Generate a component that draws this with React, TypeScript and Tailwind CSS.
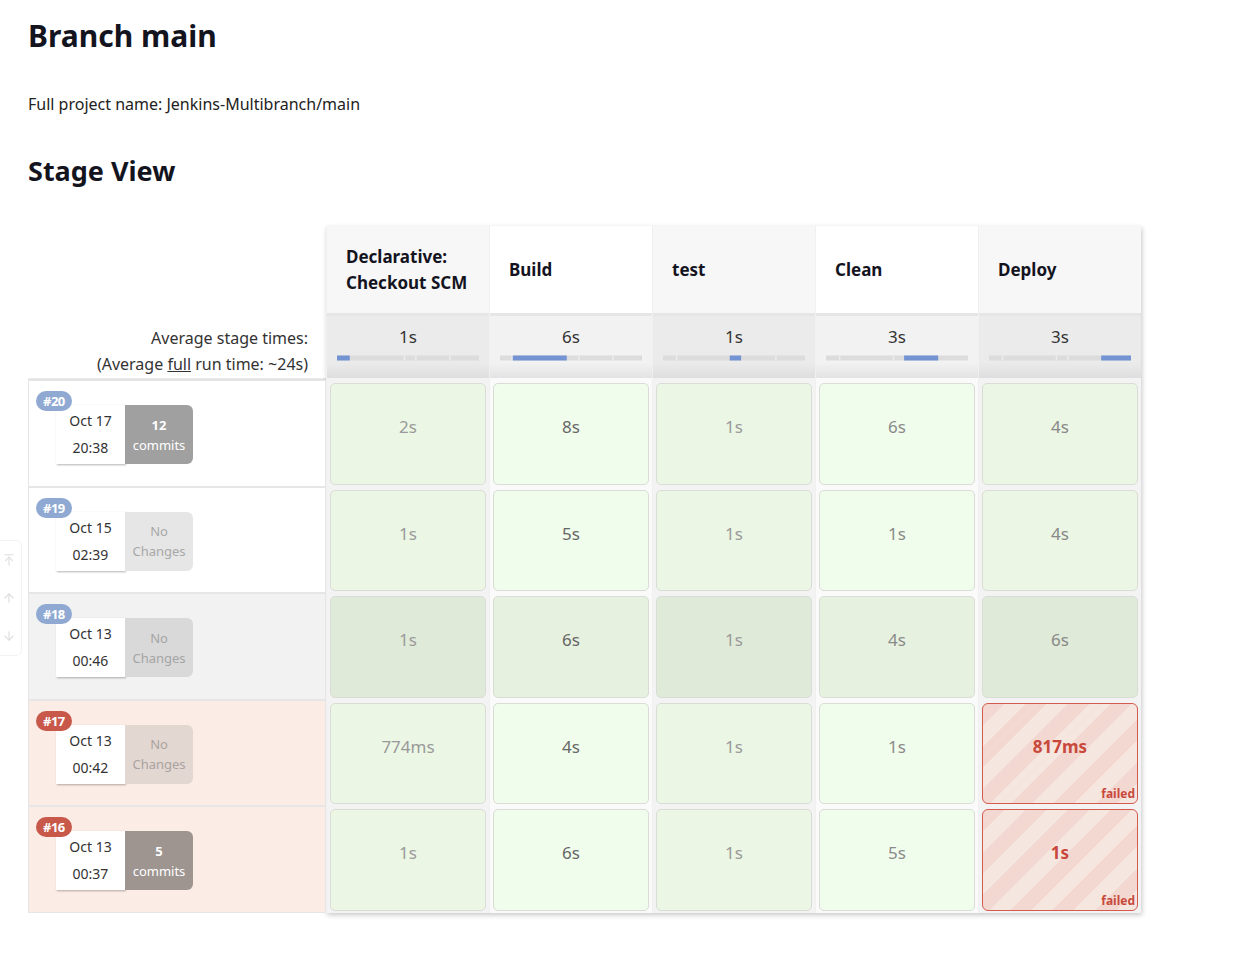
import { ArrowUpToLine, ArrowUp, ArrowDown } from "lucide-react";

// stage headers and the average-bar drawing data (percent of track)
const stages = [
  { name: "Declarative: Checkout SCM", avg: "1s", fill: [0, 9], ticks: [47, 55, 79] },
  { name: "Build", avg: "6s", fill: [9, 47], ticks: [8, 55, 79] },
  { name: "test", avg: "1s", fill: [47, 55], ticks: [9, 79] },
  { name: "Clean", avg: "3s", fill: [55, 79], ticks: [9, 47] },
  { name: "Deploy", avg: "3s", fill: [79, 100], ticks: [9, 47, 55] },
];

interface IBuild {
  num: number;
  date: string;
  time: string;
  commits: number;
  failed: boolean;
  shaded: boolean;
  cells: string[];
  changeBg: string;
  changeText: string;
}

const builds: IBuild[] = [
  { num: 20, date: "Oct 17", time: "20:38", commits: 12, failed: false, shaded: false, cells: ["2s", "8s", "1s", "6s", "4s"], changeBg: "bg-[#a0a0a0]", changeText: "text-white" },
  { num: 19, date: "Oct 15", time: "02:39", commits: 0, failed: false, shaded: false, cells: ["1s", "5s", "1s", "1s", "4s"], changeBg: "bg-[#e6e6e6]", changeText: "text-[#a8a8a8]" },
  { num: 18, date: "Oct 13", time: "00:46", commits: 0, failed: false, shaded: true, cells: ["1s", "6s", "1s", "4s", "6s"], changeBg: "bg-[#d9d9d9]", changeText: "text-[#a5a5a5]" },
  { num: 17, date: "Oct 13", time: "00:42", commits: 0, failed: true, shaded: false, cells: ["774ms", "4s", "1s", "1s", "817ms"], changeBg: "bg-[#e3d7d2]", changeText: "text-[#aaa3a0]" },
  { num: 16, date: "Oct 13", time: "00:37", commits: 5, failed: true, shaded: false, cells: ["1s", "6s", "1s", "5s", "1s"], changeBg: "bg-[#9e9591]", changeText: "text-white" },
];

const cellText = ["text-[#9a9a9a]", "text-[#666]", "text-[#9a9a9a]", "text-[#8a8a8a]", "text-[#888]"];

function AvgBar({ fill, ticks }: { fill: number[]; ticks: number[] }) {
  return (
    <svg width="142" height="6" viewBox="0 0 142 6" className="block">
      <rect x="0" y="0.5" width="142" height="5" fill="#dcdcdc" />
      {ticks.map((t) => (
        <rect key={t} x={(t / 100) * 142} y="0.5" width="1.5" height="5" fill="#ececec" />
      ))}
      <rect x={(fill[0] / 100) * 142} y="0.5" width={((fill[1] - fill[0]) / 100) * 142} height="5" fill="#7393d3" />
    </svg>
  );
}

function BuildLabel({ b }: { b: IBuild }) {
  const rowBg = b.failed ? "bg-[#fcece6]" : b.shaded ? "bg-[#f2f2f2]" : "bg-white";
  return (
    <div className={`relative h-[106.5px] border border-[#e6e6e6] ${rowBg}`}>
      <span
        className={`absolute left-[7px] top-[10px] z-10 rounded-full px-[7px] text-[13px] font-bold leading-[20px] tracking-[-0.5px] text-white ${
          b.failed ? "bg-[#c8584a]" : "bg-[#8fa9d2]"
        }`}
      >
        #{b.num}
      </span>
      <div className="ml-[27px] mt-[24px] flex h-[59px] w-[137px]">
        <div className="flex w-[69px] flex-col items-center justify-center gap-[7px] bg-white text-[14px] leading-[20px] text-[#333] shadow-[1px_1px_2px_rgba(0,0,0,0.3)]">
          <span>{b.date}</span>
          <span>{b.time}</span>
        </div>
        <div
          className={`flex w-[68px] flex-col items-center justify-center rounded-r-[6px] text-[13px] leading-[20px] ${b.changeBg} ${b.changeText}`}
        >
          {b.commits > 0 ? (
            <>
              <span className="font-bold">{b.commits}</span>
              <span>commits</span>
            </>
          ) : (
            <>
              <span>No</span>
              <span>Changes</span>
            </>
          )}
        </div>
      </div>
    </div>
  );
}

function StageCell({ b, i }: { b: IBuild; i: number }) {
  const value = b.cells[i];
  const failed = b.failed && i === 4;
  const colBg = i % 2 === 0 ? "bg-[#f3f3f3]" : "bg-[#fafafa]";

  if (failed) {
    return (
      <div className={`h-[106.5px] px-[3px] pb-[2px] pt-[3px] ${colBg}`}>
        <div className="relative flex h-full items-center justify-center rounded-[6px] border-[1.5px] border-[#d35a4d] bg-[repeating-linear-gradient(135deg,#f3d8d1_0px,#f3d8d1_15px,#f6e6e0_15px,#f6e6e0_30px)]">
          <span className="pb-[14px] text-[17px] font-bold text-[#c8493c]">{value}</span>
          <span className="absolute bottom-[2px] right-[2px] text-[12px] font-bold leading-[14px] text-[#c8493c]">failed</span>
        </div>
      </div>
    );
  }

  const green = b.shaded
    ? i % 2 === 0
      ? "bg-[#dfebd8]"
      : "bg-[#e6f2df]"
    : i % 2 === 0
      ? "bg-[#ebf6e4]"
      : "bg-[#f1fdec]";

  return (
    <div className={`h-[106.5px] px-[3px] pb-[2px] pt-[3px] ${colBg}`}>
      <div className={`flex h-full items-center justify-center rounded-[5px] border border-[#d9ddd6] ${green}`}>
        <span className={`pb-[14px] text-[17px] ${cellText[i]}`}>{value}</span>
      </div>
    </div>
  );
}

export default function App() {
  return (
    <div className="relative min-h-[955px] bg-white px-[28px] pt-[14px] font-['Noto_Sans',sans-serif] text-[#14141f]">
      {/* 페이지 제목 */}
      <h1 className="text-[30px] font-bold leading-[44px]">Branch main</h1>
      <p className="mt-[34px] text-[16px] leading-[24px] text-[#222]">Full project name: Jenkins-Multibranch/main</p>
      <h2 className="mt-[36px] text-[27px] font-bold leading-[38px]">Stage View</h2>

      {/* stage view 테이블 */}
      <div className="mt-[36px] flex">
        <div className="w-[298px]">
          <div className="h-[90px]" />
          <div className="flex h-[62px] flex-col items-end justify-center pr-[18px] pt-[8px] text-[16px] leading-[26px] text-[#333]">
            <span>Average stage times:</span>
            <span>
              (Average <span className="underline">full</span> run time: ~24s)
            </span>
          </div>
          <div className="h-[2px] bg-gradient-to-b from-[#f0f0f0] to-[#dcdcdc]" />
          {builds.map((b) => (
            <BuildLabel key={b.num} b={b} />
          ))}
        </div>

        <div className="flex shadow-[1px_2px_5px_rgba(0,0,0,0.22)]">
          {stages.map((s, i) => (
            <div key={s.name} className="w-[163px] border-l border-[#f0f0f0]">
              <div
                className={`flex h-[87px] items-center px-[19px] text-[17px] font-bold leading-[26px] text-[#14141f] ${
                  i % 2 === 0 ? "bg-[#f7f7f7]" : "bg-white"
                }`}
              >
                {s.name}
              </div>
              <div className="h-[3px] bg-[#e6e6e6]" />
              <div
                className={`flex h-[62px] flex-col items-center pt-[8px] ${
                  i % 2 === 0
                    ? "bg-[linear-gradient(to_bottom,#ebebeb_0%,#ebebeb_75%,#dedede_100%)]"
                    : "bg-[linear-gradient(to_bottom,#f2f2f2_0%,#f2f2f2_75%,#e3e3e3_100%)]"
                }`}
              >
                <span className="text-[17px] leading-[26px] text-[#333]">{s.avg}</span>
                <div className="mt-[5px]">
                  <AvgBar fill={s.fill} ticks={s.ticks} />
                </div>
              </div>
              <div className={`h-[2px] ${i % 2 === 0 ? "bg-[#f3f3f3]" : "bg-[#fafafa]"}`} />
              {builds.map((b) => (
                <StageCell key={b.num} b={b} i={i} />
              ))}
            </div>
          ))}
        </div>
      </div>

      {/* 왼쪽 스크롤 위젯 */}
      <div className="absolute left-[-14px] top-[540px] flex h-[116px] w-[36px] flex-col items-center justify-around rounded-[6px] border border-[#f2f2f2] bg-white pl-[10px] text-[#dedede]">
        <ArrowUpToLine size={14} />
        <ArrowUp size={14} />
        <ArrowDown size={14} />
      </div>
    </div>
  );
}
